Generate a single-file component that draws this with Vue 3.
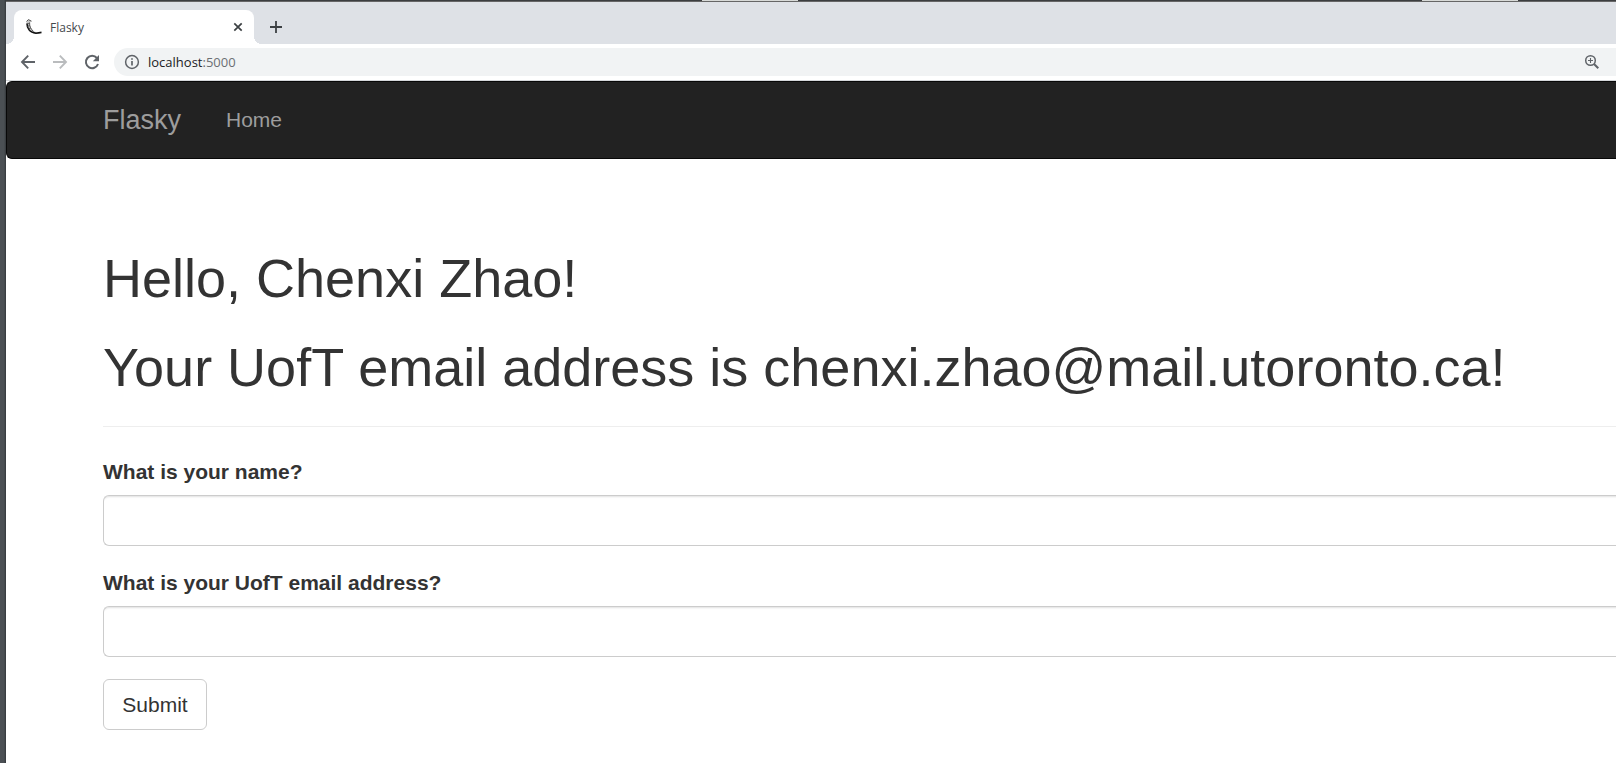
<script setup>
import { ref } from 'vue'

const name = ref('')
const email = ref('')
</script>

<template>
  <div class="desktop">
    <div class="backdrop"><span class="sliver first"></span><span class="sliver second"></span></div>
    <div class="window">
      <header class="tabs">
        <div class="tab">
          <svg class="favicon" viewBox="0 0 18 18" width="18" height="18" aria-hidden="true">
            <path d="M1.5 4 L3 1.5 L6.5 3 L4.6 5 C4.6 9 7 13 11 14 L16.5 14.4 L14 16 C7 16.5 1.5 12 1.5 4 Z" fill="#c4c4c4" />
            <path d="M2 5.5 C2 10 4.5 14.6 11 15.2 L16.5 14.4" fill="none" stroke="#111" stroke-width="1.6" />
            <path d="M1.5 3.5 L3.4 1.6 L6.5 3.2 M4.6 4.5 C4.2 8 6 11.5 8.5 13.4" fill="none" stroke="#555" stroke-width="1" />
            <path d="M1.8 6 L4.4 5.4 M2.2 8.4 L4.8 7.6 M3.4 11 L5.8 9.8" stroke="#444" stroke-width="0.8" />
          </svg>
          <span class="tab-title">Flasky</span>
          <button class="icon-button" type="button" aria-label="Close tab">
            <svg viewBox="0 0 10 10" width="10" height="10"><path d="M1.3 1.3 L8.7 8.7 M8.7 1.3 L1.3 8.7" stroke="#3c4043" stroke-width="1.7" /></svg>
          </button>
        </div>
        <button class="icon-button new-tab" type="button" aria-label="New tab">
          <svg viewBox="0 0 12 12" width="12" height="12"><path d="M6 0 V12 M0 6 H12" stroke="#3c4043" stroke-width="1.8" /></svg>
        </button>
      </header>

      <div class="toolbar">
        <button class="icon-button" type="button" aria-label="Back">
          <svg viewBox="0 0 16 16" width="16" height="16"><path d="M15 8 H2.5 M8.2 1.7 L2 8 L8.2 14.3" fill="none" stroke="#5f6368" stroke-width="1.9" /></svg>
        </button>
        <button class="icon-button" type="button" aria-label="Forward">
          <svg viewBox="0 0 16 16" width="16" height="16"><path d="M1 8 H13.5 M7.8 1.7 L14 8 L7.8 14.3" fill="none" stroke="#babcbe" stroke-width="1.9" /></svg>
        </button>
        <button class="icon-button" type="button" aria-label="Reload">
          <svg viewBox="0 0 16 16" width="16" height="16"><path d="M12.9 4 A6.2 6.2 0 1 0 14 10" fill="none" stroke="#5f6368" stroke-width="2" /><path d="M15 1 V7.2 H8.8 Z" fill="#5f6368" /></svg>
        </button>
        <div class="address">
          <svg viewBox="0 0 16 16" width="16" height="16" aria-hidden="true"><circle cx="8" cy="8" r="6.4" fill="none" stroke="#5f6368" stroke-width="1.5" /><path d="M8 7 V11.5 M8 4.2 V5.8" stroke="#5f6368" stroke-width="1.7" /></svg>
          <a class="url" href="#">localhost<span class="port">:5000</span></a>
          <button class="icon-button" type="button" aria-label="Zoom">
            <svg viewBox="0 0 16 16" width="16" height="16"><circle cx="6.5" cy="6.5" r="4.8" fill="none" stroke="#5f6368" stroke-width="1.5" /><path d="M10 10 L14.3 14.3" stroke="#5f6368" stroke-width="2" /><path d="M6.5 4 V9 M4 6.5 H9" stroke="#5f6368" stroke-width="1.1" /></svg>
          </button>
        </div>
      </div>

      <nav class="navbar">
        <a class="brand" href="#">Flasky</a>
        <a class="nav-link" href="#">Home</a>
      </nav>

      <main class="content">
        <div class="page-header">
          <h1>Hello, Chenxi Zhao!</h1>
          <h1>Your UofT email address is chenxi.zhao@mail.utoronto.ca!</h1>
        </div>
        <form @submit.prevent>
          <div class="group">
            <label for="name">What is your name?</label>
            <input id="name" v-model="name" type="text" />
          </div>
          <div class="group">
            <label for="email">What is your UofT email address?</label>
            <input id="email" v-model="email" type="text" />
          </div>
          <button class="submit" type="submit">Submit</button>
        </form>
      </main>
    </div>
  </div>
</template>

<style>
body {
  margin: 0;
}
</style>

<style scoped>
* {
  box-sizing: border-box;
}
.desktop {
  min-height: 100vh;
  padding-left: 6px;
  background: linear-gradient(90deg, #4b5054 0, #4b5054 4px, #34383b 6px);
  font-family: "Liberation Sans", Arial, sans-serif;
}
.backdrop {
  display: flex;
  height: 2px;
  padding-left: 43.2%;
  background: #3c3e40;
  border-bottom: 1px solid #666;
}
.sliver {
  width: 96px;
  background: #d8dad8;
}
.second {
  margin-left: 624px;
}
.window {
  display: flex;
  flex-direction: column;
  min-height: calc(100vh - 2px);
  background: #fff;
}
.icon-button {
  display: flex;
  padding: 0;
  border: 0;
  background: none;
}
.tabs {
  display: flex;
  height: 42px;
  padding: 8px 8px 0;
  background: #dee1e6;
}
.tab {
  position: relative;
  display: flex;
  align-items: center;
  width: 240px;
  padding: 0 11px;
  border-radius: 8px 8px 0 0;
  background: #fff;
}
.tab::before,
.tab::after {
  content: "";
  position: absolute;
  bottom: 0;
  width: 8px;
  height: 8px;
}
.tab::before {
  right: 100%;
  background: radial-gradient(circle at 0 0, transparent 8px, #fff 8px);
}
.tab::after {
  left: 100%;
  background: radial-gradient(circle at 100% 0, transparent 8px, #fff 8px);
}
.tab-title {
  flex: 1;
  margin-left: 7px;
  font: 12px "Open Sans", sans-serif;
  color: #45494d;
}
.new-tab {
  align-self: center;
  margin-left: 16px;
}
.toolbar {
  display: flex;
  align-items: center;
  gap: 16px;
  height: 37px;
  padding: 0 0 1px 14px;
  border-bottom: 1px solid #d5d8db;
}
.address {
  display: flex;
  flex: 1;
  align-items: center;
  height: 28px;
  margin-left: -2px;
  padding: 0 16px 0 10px;
  border-radius: 14px 0 0 14px;
  background: #f1f3f4;
}
.url {
  flex: 1;
  margin-left: 8px;
  font: 13px "Open Sans", sans-serif;
  color: #202124;
  text-decoration: none;
}
.port {
  color: #6b6f73;
}
.navbar {
  display: flex;
  align-items: center;
  gap: 45px;
  height: 78px;
  padding-left: 96px;
  border: 1px solid #080808;
  border-right: 0;
  border-radius: 6px 0 0 6px;
  background: #222;
}
.brand,
.nav-link {
  line-height: 30px;
  color: #9d9d9d;
  text-decoration: none;
}
.brand {
  font-size: 27px;
}
.nav-link {
  font-size: 21px;
}
.content {
  padding: 90px 0 32px 97px;
  color: #333;
}
.page-header {
  margin-bottom: 30px;
  padding-bottom: 29px;
  border-bottom: 1px solid #eee;
}
h1 {
  margin: 0;
  font-size: 54px;
  font-weight: 400;
  line-height: 59px;
}
h1 + h1 {
  margin-top: 30px;
}
.group {
  margin-bottom: 22px;
}
label {
  display: block;
  margin-bottom: 8px;
  font-size: 21px;
  font-weight: 700;
  line-height: 30px;
}
input {
  display: block;
  width: 100%;
  height: 51px;
  padding: 9px 18px;
  border: 1px solid #ccc;
  border-right: 0;
  border-radius: 6px 0 0 6px;
  background: #fff;
  box-shadow: inset 0 3px 2px -2px rgba(0, 0, 0, 0.12);
  font: 21px "Liberation Sans", Arial, sans-serif;
  color: #555;
}
.submit {
  min-width: 104px;
  height: 51px;
  padding: 0 18px;
  border: 1px solid #ccc;
  border-radius: 6px;
  background: #fff;
  font: 21px "Liberation Sans", Arial, sans-serif;
  color: #333;
}
</style>
